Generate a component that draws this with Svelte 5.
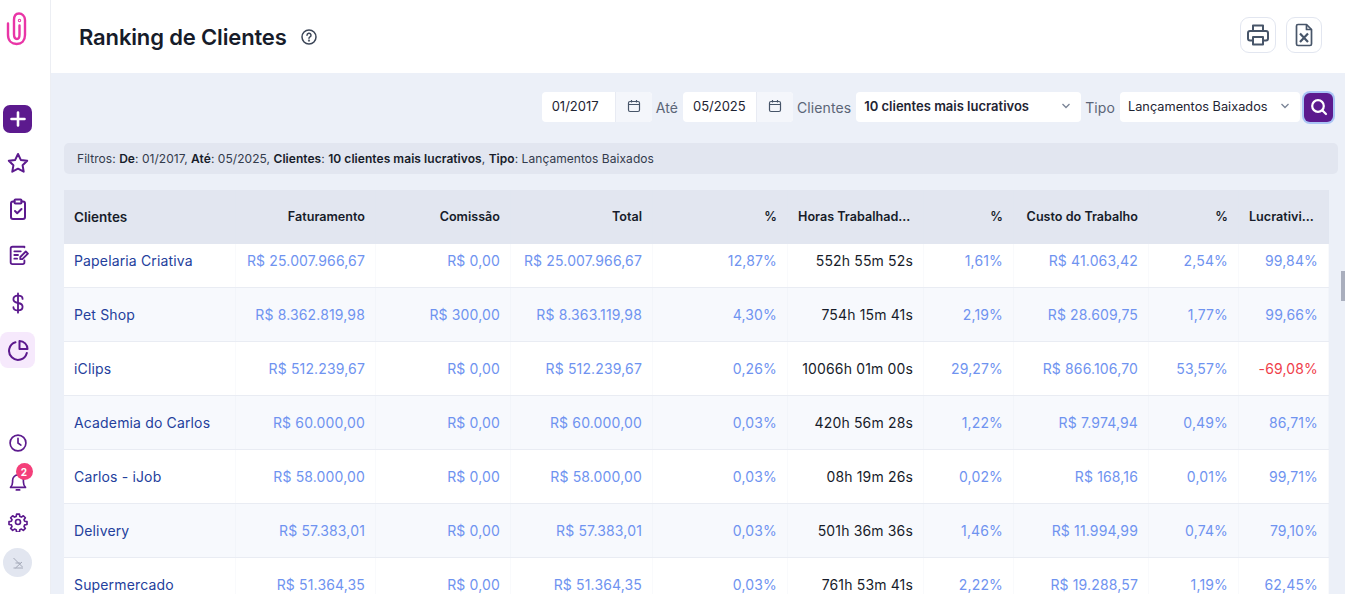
<script>
	const cols = [172, 140, 135, 142, 135, 136, 90, 135, 90, 90];
	const heads = ['Clientes', 'Faturamento', 'Comissão', 'Total', '%', 'Horas Trabalhad...', '%', 'Custo do Trabalho', '%', 'Lucrativi...'];
	const rows = [
		['Papelaria Criativa', 'R$ 25.007.966,67', 'R$ 0,00', 'R$ 25.007.966,67', '12,87%', '552h 55m 52s', '1,61%', 'R$ 41.063,42', '2,54%', '99,84%'],
		['Pet Shop', 'R$ 8.362.819,98', 'R$ 300,00', 'R$ 8.363.119,98', '4,30%', '754h 15m 41s', '2,19%', 'R$ 28.609,75', '1,77%', '99,66%'],
		['iClips', 'R$ 512.239,67', 'R$ 0,00', 'R$ 512.239,67', '0,26%', '10066h 01m 00s', '29,27%', 'R$ 866.106,70', '53,57%', '-69,08%'],
		['Academia do Carlos', 'R$ 60.000,00', 'R$ 0,00', 'R$ 60.000,00', '0,03%', '420h 56m 28s', '1,22%', 'R$ 7.974,94', '0,49%', '86,71%'],
		['Carlos - iJob', 'R$ 58.000,00', 'R$ 0,00', 'R$ 58.000,00', '0,03%', '08h 19m 26s', '0,02%', 'R$ 168,16', '0,01%', '99,71%'],
		['Delivery', 'R$ 57.383,01', 'R$ 0,00', 'R$ 57.383,01', '0,03%', '501h 36m 36s', '1,46%', 'R$ 11.994,99', '0,74%', '79,10%'],
		['Supermercado', 'R$ 51.364,35', 'R$ 0,00', 'R$ 51.364,35', '0,03%', '761h 53m 41s', '2,22%', 'R$ 19.288,57', '1,19%', '62,45%']
	];
	const grid = cols.map((c) => c + 'px').join(' ');
</script>

<div class="page">
	<aside class="sidebar">
		<svg class="logo" width="22" height="34" viewBox="0 0 22 34" fill="none" stroke="#e935a6" stroke-width="2.400" stroke-linecap="round">
			<path d="M2 11.500V23C2 29 6 32 10.700 32C15.500 32 19 29 19 23V8C19 4 16 1.500 13 1.500C9.500 1.500 8 4 8 8V22C8 25.500 9.500 27 11 27C12.500 27 13.500 25 13.500 22.500V13.500" />
			<circle cx="13.500" cy="8.500" r="0.500" />
		</svg>
		<div class="nav">
			<button class="add" aria-label="Novo">
				<svg width="18" height="18" viewBox="0 0 18 18" fill="none" stroke="#fff" stroke-width="2.600" stroke-linecap="round"><path d="M9 2.500v13M2.500 9h13" /></svg>
			</button>
			<div class="item">
				<svg width="24" height="24" viewBox="0 0 24 24" class="ic"><path d="M12 3l2.800 5.900 6.400.9-4.600 4.500 1.100 6.400L12 17.700l-5.700 3 1.100-6.400-4.600-4.500 6.400-.9z" /></svg>
			</div>
			<div class="item">
				<svg width="24" height="24" viewBox="0 0 24 24" class="ic"><path d="M8.500 4.500H7a2 2 0 0 0-2 2V20a2 2 0 0 0 2 2h10a2 2 0 0 0 2-2V6.500a2 2 0 0 0-2-2h-1.500" /><rect x="8.500" y="2.500" width="7" height="4" rx="1" /><path d="M9 14l2.200 2.200L15.500 12" /></svg>
			</div>
			<div class="item">
				<svg width="22" height="22" viewBox="0 0 24 24" class="ic"><path d="M19 3.500V3H6a2 2 0 0 0-2 2v15a2 2 0 0 0 2 2h11a2 2 0 0 0 2-2v-2" /><path d="M8 8h7M8 12h4M8 16h3" /><path d="M14.500 16.500v-2.300l6-6 2.300 2.300-6 6z" /></svg>
			</div>
			<div class="item dollar">
				<svg width="22" height="24" viewBox="0 0 24 24" class="ic"><path d="M17 7.500C17 5.500 15 4 12 4S7 5.700 7 8s2 3.500 5 4 5 1.700 5 4-2 4-5 4-5-1.500-5-3.500" /><path d="M12 1.500v21" /></svg>
			</div>
			<div class="item active">
				<svg width="24" height="24" viewBox="0 0 24 24" class="ic"><path d="M9.500 4.200A9 9 0 1 0 20.800 15" /><path d="M13.500 3A8 8 0 0 1 21.500 11H13.500z" /></svg>
			</div>
		</div>
		<div class="nav-bottom">
			<div class="small">
				<svg width="20" height="20" viewBox="0 0 24 24" class="ic"><circle cx="12" cy="12" r="9.500" /><path d="M12 6.500V12l3.500 2.500" /></svg>
			</div>
			<div class="small">
				<svg width="20" height="20" viewBox="0 0 24 24" class="ic"><path d="M3 18.500h18c-1.500-1.500-2.500-3-2.500-6.500V10a6.500 6.500 0 0 0-13 0v2c0 3.500-1 5-2.500 6.500z" /><path d="M10 21.500h4" /></svg>
				<span class="badge">2</span>
			</div>
			<div class="small">
				<svg width="20" height="20" viewBox="0 0 24 24" class="ic"><circle cx="12" cy="12" r="3" /><path d="M10.300 2.500h3.400l.5 2.800 1.900.8 2.300-1.600 2.400 2.400-1.600 2.300.8 1.900 2.800.5v3.400l-2.800.5-.8 1.900 1.600 2.300-2.400 2.400-2.300-1.600-1.900.8-.5 2.800h-3.400l-.5-2.800-1.900-.8-2.300 1.600-2.400-2.400 1.600-2.300-.8-1.900-2.800-.5v-3.400l2.800-.5.8-1.900L3.200 6.900l2.400-2.400 2.300 1.600 1.900-.8z" /></svg>
			</div>
			<div class="avatar">
				<svg width="14" height="14" viewBox="0 0 14 14" fill="none" stroke="#a4a9b8" stroke-width="1"><path d="M2.500 2l9 9M2.500 12h9.500M11 6l-6.500 6M4.500 7h5" /></svg>
			</div>
		</div>
	</aside>

	<main class="main">
		<header class="top">
			<div class="title">
				<h1>Ranking de Clientes</h1>
				<svg width="18" height="18" viewBox="0 0 18 18" fill="none" stroke="#3c4658" stroke-width="1.500"><circle cx="9" cy="9" r="7" /><path d="M7 7.200a2 2 0 1 1 3 1.700c-.7.400-1 .8-1 1.400" stroke-linecap="round" /><circle cx="9" cy="12.600" r=".4" /></svg>
			</div>
			<div class="actions">
				<button class="act" aria-label="Imprimir">
					<svg width="24" height="24" viewBox="0 0 24 24" fill="none" stroke="#475569" stroke-width="2" stroke-linejoin="round"><path d="M7 8V2.500h10V8" /><path d="M7 17.500H4a2 2 0 0 1-2-2V10a2 2 0 0 1 2-2h16a2 2 0 0 1 2 2v5.500a2 2 0 0 1-2 2h-3" /><rect x="7" y="14" width="10" height="7.500" /></svg>
				</button>
				<button class="act" aria-label="Excel">
					<svg width="22" height="24" viewBox="0 0 22 24" fill="none" stroke="#475569" stroke-width="1.700" stroke-linejoin="round"><path d="M13.500 1.500H5a1.500 1.500 0 0 0-1.500 1.500v18A1.500 1.500 0 0 0 5 22.500h12a1.500 1.500 0 0 0 1.500-1.500V6.500z" /><path d="M13.500 1.500v5h5" /><path d="M7 10.500l8 8.500M15 10.500l-8 8.500" stroke-width="2.200" /></svg>
				</button>
			</div>
		</header>

		<section class="content">
			<div class="filters">
				<div class="date">
					<span class="val">01/2017</span>
					<span class="cal"><svg width="14" height="14" viewBox="0 0 14 14" fill="none" stroke="#475569" stroke-width="1.200"><rect x="1.500" y="2.500" width="11" height="10" rx="1.500" /><path d="M1.500 5.500h11M4.500 1v2.500M9.500 1v2.500" /></svg></span>
				</div>
				<span class="lbl">Até</span>
				<div class="date">
					<span class="val">05/2025</span>
					<span class="cal"><svg width="14" height="14" viewBox="0 0 14 14" fill="none" stroke="#475569" stroke-width="1.200"><rect x="1.500" y="2.500" width="11" height="10" rx="1.500" /><path d="M1.500 5.500h11M4.500 1v2.500M9.500 1v2.500" /></svg></span>
				</div>
				<span class="lbl">Clientes</span>
				<div class="select clients">
					<b>10 clientes mais lucrativos</b>
					<svg width="10" height="6" viewBox="0 0 10 6" fill="none" stroke="#7a8496" stroke-width="1.300"><path d="M1.500 1L5 4.500 8.500 1" /></svg>
				</div>
				<span class="lbl">Tipo</span>
				<div class="select kind">
					<span>Lançamentos Baixados</span>
					<svg width="10" height="6" viewBox="0 0 10 6" fill="none" stroke="#7a8496" stroke-width="1.300"><path d="M1.500 1L5 4.500 8.500 1" /></svg>
				</div>
				<button class="search" aria-label="Buscar">
					<svg width="18" height="18" viewBox="0 0 18 18" fill="none" stroke="#fff" stroke-width="2.200" stroke-linecap="round"><circle cx="8" cy="8" r="5.800" /><path d="M12.500 12.500l3.500 3.500" /></svg>
				</button>
			</div>

			<div class="summary">
				Filtros: <b>De</b>: 01/2017, <b>Até</b>: 05/2025, <b>Clientes</b>: <b>10 clientes mais lucrativos</b>, <b>Tipo</b>: Lançamentos Baixados
			</div>

			<div class="table">
				<div class="row head" style="grid-template-columns: {grid}">
					{#each heads as h, i}
						<div class="cell" class:left={i === 0} class:cut={h.endsWith('...')}>{h}</div>
					{/each}
				</div>
				<div class="body">
					<div class="scroller">
						{#each rows as r, ri}
							<div class="row line" class:alt={ri % 2 === 1} style="grid-template-columns: {grid}">
								{#each r as v, i}
									<div class="cell" class:left={i === 0} class:hours={i === 5} class:neg={v.startsWith('-')}>{v}</div>
								{/each}
							</div>
						{/each}
					</div>
				</div>
			</div>
			<div class="thumb"></div>
		</section>
	</main>
</div>

<style>
	:global(body) {
		margin: 0;
		font-family: Inter, 'Liberation Sans', sans-serif;
		overflow: hidden;
	}

	.page {
		display: flex;
		height: 594px;
		width: 1345px;
		overflow: hidden;
	}

	.sidebar {
		width: 51px;
		flex: none;
		background: #fff;
		border-right: 1px solid #eceef3;
		box-sizing: border-box;
		display: flex;
		flex-direction: column;
		align-items: flex-start;
	}

	.logo {
		margin: 12px 0 0 6px;
		flex: none;
	}

	.nav {
		margin-top: 59px;
		width: 35px;
		display: flex;
		flex-direction: column;
		align-items: center;
		gap: 10px;
	}

	.add {
		width: 29px;
		height: 28px;
		margin-bottom: 2px;
		padding: 0;
		border: 0;
		border-radius: 7px;
		background: #5c1a8e;
		display: flex;
		align-items: center;
		justify-content: center;
	}

	.item {
		width: 35px;
		height: 36px;
		display: flex;
		align-items: center;
		justify-content: center;
		border-radius: 8px;
	}

	.item.dollar {
		margin-top: 2px;
	}

	.item.active {
		margin-top: 1px;
		background: #f6e9fc;
	}

	.ic {
		fill: none;
		stroke: #5c1a8e;
		stroke-width: 2;
		stroke-linejoin: round;
		stroke-linecap: round;
	}

	.nav-bottom {
		margin-top: auto;
		margin-bottom: 17px;
		width: 35px;
		display: flex;
		flex-direction: column;
		align-items: center;
		gap: 19.500px;
	}

	.small {
		height: 20px;
		width: 20px;
		position: relative;
	}

	.badge {
		position: absolute;
		top: -9px;
		left: 8px;
		width: 17px;
		height: 17px;
		border-radius: 50%;
		background: #f43f7a;
		color: #fff;
		font-size: 10px;
		font-weight: 700;
		display: flex;
		align-items: center;
		justify-content: center;
	}

	.avatar {
		width: 29px;
		height: 29px;
		border-radius: 50%;
		background: #e2e6f0;
		display: flex;
		align-items: center;
		justify-content: center;
		margin-top: -3px;
	}

	.main {
		flex: 1;
		min-width: 0;
		display: flex;
		flex-direction: column;
	}

	.top {
		height: 73px;
		flex: none;
		background: #fff;
		display: flex;
		align-items: center;
		justify-content: space-between;
		padding: 0 23px 0 28px;
		box-sizing: border-box;
	}

	.title {
		display: flex;
		align-items: center;
		gap: 13px;
		margin-top: 1px;
	}

	h1 {
		margin: 0;
		font-size: 22px;
		font-weight: 600;
		color: #171c2a;
		letter-spacing: -0.15px;
	}

	.actions {
		display: flex;
		gap: 10px;
		margin-top: -4px;
	}

	.act {
		width: 36px;
		height: 36px;
		padding: 0;
		background: #fff;
		border: 1px solid #e2e6f0;
		border-radius: 9px;
		display: flex;
		align-items: center;
		justify-content: center;
	}

	.content {
		flex: 1;
		min-height: 0;
		background: #ecf0f8;
		padding: 19px 0 0 13px;
		position: relative;
		overflow: hidden;
	}

	.filters {
		display: flex;
		align-items: center;
		justify-content: flex-end;
		height: 30px;
		padding-right: 12px;
		font-size: 14px;
		letter-spacing: 0.1px;
		color: #5b6577;
	}

	.date {
		display: flex;
		height: 30px;
		width: 110px;
		background: #fff;
		border-radius: 4px;
		overflow: hidden;
		box-sizing: border-box;
		letter-spacing: 0;
	}

	.val {
		flex: 1;
		padding-left: 10px;
		line-height: 28px;
		font-size: 13px;
		color: #1e2433;
	}

	.cal {
		width: 37px;
		flex: none;
		background: #f4f6fb;
		border-left: 1px solid #e8ebf3;
		display: flex;
		align-items: center;
		justify-content: center;
		padding-bottom: 2px;
		box-sizing: border-box;
	}

	.lbl {
		padding: 0 5px 0 4px;
		white-space: nowrap;
	}

	.select {
		display: flex;
		align-items: center;
		justify-content: space-between;
		height: 30px;
		background: #fff;
		border-radius: 4px;
		padding: 0 10px 2px 8px;
		box-sizing: border-box;
		font-size: 13px;
		letter-spacing: 0;
		color: #1e2433;
	}

	.clients {
		width: 225px;
	}

	.clients b {
		font-weight: 600;
	}

	.kind {
		width: 180px;
		font-size: 12.750px;
	}

	.search {
		width: 29px;
		height: 29px;
		margin-left: 4px;
		padding: 0;
		border: 0;
		border-radius: 6px;
		background: #5c1a8e;
		box-shadow: 0 0 0 2px #a9c4f5;
		display: flex;
		align-items: center;
		justify-content: center;
	}

	.summary {
		margin: 21px 7px 0 0;
		height: 31px;
		line-height: 31px;
		padding-left: 13px;
		background: #e2e6f0;
		border-radius: 5px;
		font-size: 12px;
		letter-spacing: 0.05px;
		color: #333b4c;
	}

	.summary b {
		font-weight: 600;
		color: #171c2a;
	}

	.table {
		margin-top: 16px;
		width: 1265px;
	}

	.row {
		display: grid;
	}

	.head {
		height: 54px;
		box-sizing: border-box;
		padding-bottom: 1px;
		background: #e2e6f0;
		font-size: 12.600px;
		font-weight: 600;
		color: #171c2a;
	}

	.head .cell.left {
		font-size: 13.500px;
	}

	.head .cell.cut {
		justify-content: flex-start;
	}

	.body {
		overflow: hidden;
		height: 400px;
	}

	.scroller {
		margin-top: -10px;
	}

	.line {
		height: 54px;
		box-sizing: border-box;
		background: #fff;
		border-bottom: 1px solid #e9ecf3;
		font-size: 14px;
		letter-spacing: 0.15px;
		color: #6f93f0;
	}

	.line.alt {
		background: #f7f9fd;
	}

	.cell {
		display: flex;
		align-items: center;
		justify-content: flex-end;
		padding: 0 10px;
		border-right: 1px solid rgba(225, 229, 240, 0.2);
		white-space: nowrap;
		overflow: hidden;
	}

	.cell.left {
		justify-content: flex-start;
	}

	.line .cell.left {
		color: #24409c;
	}

	.line .cell.hours {
		color: #171c2a;
	}

	.line .cell.neg {
		color: #ef3e4a;
	}

	.thumb {
		position: absolute;
		top: 198px;
		right: 0;
		width: 4px;
		height: 30px;
		background: #a9aebd;
	}
</style>
